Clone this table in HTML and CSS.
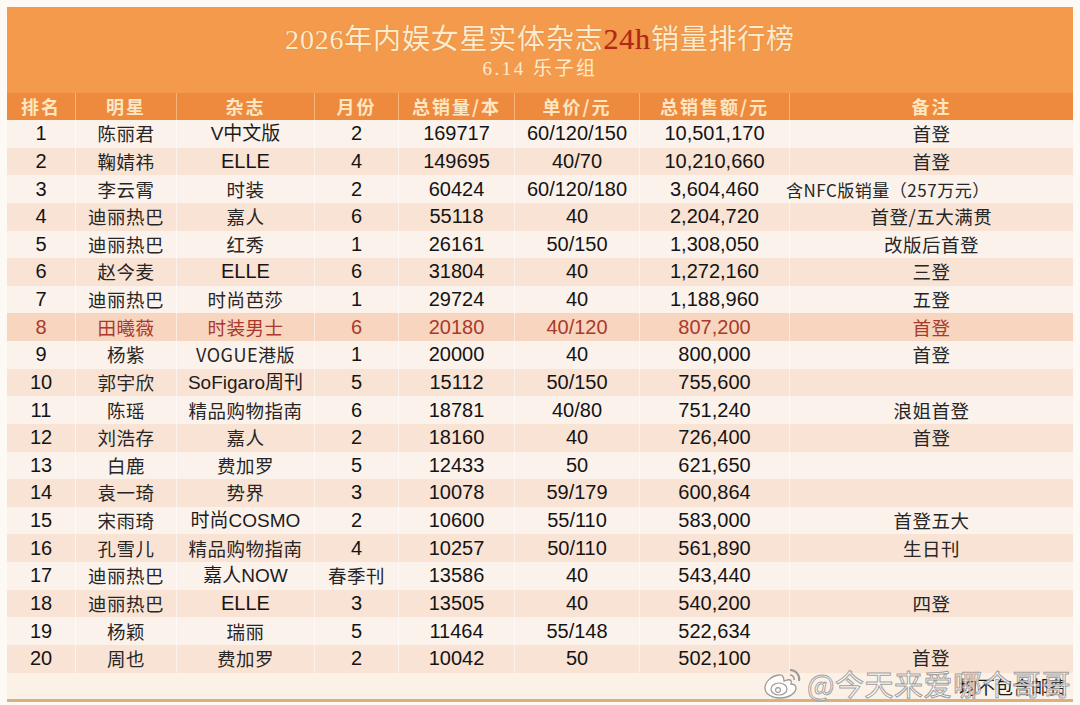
FILE: index.html
```html
<!DOCTYPE html>
<html lang="zh-CN">
<head>
<meta charset="utf-8">
<title>2026年内娱女星实体杂志24h销量排行榜</title>
<link rel="stylesheet" href="styles.css">
</head>
<body>
<div class="sheet">
  <div class="banner">
    <div class="title">2026年内娱女星实体杂志<span class="hl">24h</span>销量排行榜</div>
    <div class="subtitle">6.14 乐子组</div>
  </div>
  <div class="grid head">
    <div>排名</div><div>明星</div><div>杂志</div><div>月份</div><div>总销量/本</div><div>单价/元</div><div>总销售额/元</div><div>备注</div>
  </div>
  <div class="body">
    <div class="grid row odd"><div>1</div><div class="cjk">陈丽君</div><div class="mix">V中文版</div><div>2</div><div>169717</div><div>60/120/150</div><div>10,501,170</div><div class="cjk">首登</div></div>
    <div class="grid row even"><div>2</div><div class="cjk">鞠婧祎</div><div>ELLE</div><div>4</div><div>149695</div><div>40/70</div><div>10,210,660</div><div class="cjk">首登</div></div>
    <div class="grid row odd"><div>3</div><div class="cjk">李云霄</div><div class="cjk">时装</div><div>2</div><div>60424</div><div>60/120/180</div><div>3,604,460</div><div class="cjk small left">含NFC版销量（257万元）</div></div>
    <div class="grid row even"><div>4</div><div class="cjk">迪丽热巴</div><div class="cjk">嘉人</div><div>6</div><div>55118</div><div>40</div><div>2,204,720</div><div class="cjk">首登/五大满贯</div></div>
    <div class="grid row odd"><div>5</div><div class="cjk">迪丽热巴</div><div class="cjk">红秀</div><div>1</div><div>26161</div><div>50/150</div><div>1,308,050</div><div class="cjk">改版后首登</div></div>
    <div class="grid row even"><div>6</div><div class="cjk">赵今麦</div><div>ELLE</div><div>6</div><div>31804</div><div>40</div><div>1,272,160</div><div class="cjk">三登</div></div>
    <div class="grid row odd"><div>7</div><div class="cjk">迪丽热巴</div><div class="cjk">时尚芭莎</div><div>1</div><div>29724</div><div>40</div><div>1,188,960</div><div class="cjk">五登</div></div>
    <div class="grid row mark"><div>8</div><div class="cjk">田曦薇</div><div class="cjk">时装男士</div><div>6</div><div>20180</div><div>40/120</div><div>807,200</div><div class="cjk">首登</div></div>
    <div class="grid row odd"><div>9</div><div class="cjk">杨紫</div><div class="cjk narrow">VOGUE港版</div><div>1</div><div>20000</div><div>40</div><div>800,000</div><div class="cjk">首登</div></div>
    <div class="grid row even"><div>10</div><div class="cjk">郭宇欣</div><div class="mix">SoFigaro周刊</div><div>5</div><div>15112</div><div>50/150</div><div>755,600</div><div></div></div>
    <div class="grid row odd"><div>11</div><div class="cjk">陈瑶</div><div class="cjk">精品购物指南</div><div>6</div><div>18781</div><div>40/80</div><div>751,240</div><div class="cjk">浪姐首登</div></div>
    <div class="grid row even"><div>12</div><div class="cjk">刘浩存</div><div class="cjk">嘉人</div><div>2</div><div>18160</div><div>40</div><div>726,400</div><div class="cjk">首登</div></div>
    <div class="grid row odd"><div>13</div><div class="cjk">白鹿</div><div class="cjk">费加罗</div><div>5</div><div>12433</div><div>50</div><div>621,650</div><div></div></div>
    <div class="grid row even"><div>14</div><div class="cjk">袁一琦</div><div class="cjk">势界</div><div>3</div><div>10078</div><div>59/179</div><div>600,864</div><div></div></div>
    <div class="grid row odd"><div>15</div><div class="cjk">宋雨琦</div><div class="mix">时尚COSMO</div><div>2</div><div>10600</div><div>55/110</div><div>583,000</div><div class="cjk">首登五大</div></div>
    <div class="grid row even"><div>16</div><div class="cjk">孔雪儿</div><div class="cjk">精品购物指南</div><div>4</div><div>10257</div><div>50/110</div><div>561,890</div><div class="cjk">生日刊</div></div>
    <div class="grid row odd"><div>17</div><div class="cjk">迪丽热巴</div><div class="mix">嘉人NOW</div><div class="cjk">春季刊</div><div>13586</div><div>40</div><div>543,440</div><div></div></div>
    <div class="grid row even"><div>18</div><div class="cjk">迪丽热巴</div><div>ELLE</div><div>3</div><div>13505</div><div>40</div><div>540,200</div><div class="cjk">四登</div></div>
    <div class="grid row odd"><div>19</div><div class="cjk">杨颖</div><div class="cjk">瑞丽</div><div>5</div><div>11464</div><div>55/148</div><div>522,634</div><div></div></div>
    <div class="grid row even"><div>20</div><div class="cjk">周也</div><div class="cjk">费加罗</div><div>2</div><div>10042</div><div>50</div><div>502,100</div><div class="cjk up">首登</div></div>
  </div>
  <div class="foot">均不包含邮费</div>
  <div class="watermark">
    <svg class="wb" viewBox="0 0 40 34" width="40" height="34">
      <path d="M16 9c-8 1-14 7-14 13 0 6 7 10 15 10 9 0 16-5 16-10 0-3-3-4-5-4 1-3 0-5-4-4l-3 1c0-4-2-7-5-6z" fill="#fff" fill-opacity=".85" stroke="#9a9a9a" stroke-width="1.3"/>
      <ellipse cx="16" cy="23" rx="8" ry="6" fill="none" stroke="#9a9a9a" stroke-width="1.2"/>
      <circle cx="15" cy="24" r="2.4" fill="none" stroke="#9a9a9a" stroke-width="1.1"/>
      <path d="M27 4a9 9 0 0 1 9 11" fill="none" stroke="#9a9a9a" stroke-width="2"/>
      <path d="M27 9a4 4 0 0 1 4 5" fill="none" stroke="#9a9a9a" stroke-width="1.6"/>
    </svg>
    <span class="wmtext">@今天来爱哪个哥哥</span>
  </div>
</div>
</body>
</html>
```
FILE: styles.css
```css
html, body {
  margin: 0;
  padding: 0;
}
body {
  background: #fdfaf5;
  width: 1080px;
  height: 705px;
  overflow: hidden;
  font-family: "Liberation Sans", "Noto Sans CJK SC", sans-serif;
}
.sheet {
  position: relative;
  margin: 7px 0 0 7px;
  width: 1066px;
  border-bottom: 3px solid #dcb07e;
}
.banner {
  height: 86px;
  background: #f49a4c;
  display: flex;
  flex-direction: column;
  align-items: center;
  box-sizing: border-box;
  padding-top: 13px;
  color: #fcebcc;
  font-family: "Liberation Serif", "Noto Sans CJK SC", serif;
}
.title {
  font-size: 28px;
  line-height: 38px;
  letter-spacing: 0.8px;
  text-shadow: 0 0 1px rgba(150, 70, 10, 0.4);
}
.title .hl {
  color: #b3261a;
  font-size: 30px;
}
.subtitle {
  font-size: 19px;
  line-height: 24px;
  letter-spacing: 2.5px;
  margin-top: -2px;
}
.grid {
  display: grid;
  grid-template-columns: 69px 101px 138px 84px 116px 125px 150px 283px;
}
.head {
  height: 27px;
  background: #ee8a3d;
  color: #fde6c2;
  font-family: "Noto Sans CJK SC", sans-serif;
  font-size: 18px;
  font-weight: 700;
  letter-spacing: 2px;
}
.head > div {
  display: flex;
  align-items: center;
  justify-content: center;
  border-right: 1px solid #f6b679;
  line-height: 27px;
}
.head > div:last-child {
  border-right: none;
}
.row {
  height: 27.63px;
  font-size: 20px;
  color: #141414;
}
.row > div {
  display: flex;
  align-items: center;
  justify-content: center;
  border-right: 1px solid rgba(255, 255, 255, 0.55);
  white-space: nowrap;
  line-height: 27px;
}
.row > div:last-child {
  border-right: none;
}
.odd {
  background: #fcf2ec;
}
.even {
  background: #f9e3d4;
}
.mark {
  background: #f7d5bf;
  color: #a93a2c;
}
.cjk {
  font-family: "Noto Sans CJK SC", sans-serif;
  font-size: 18.5px;
  color: #262626;
  letter-spacing: 0.5px;
}
.mix {
  font-size: 19px;
  color: #1c1c1c;
}
.mark .cjk {
  color: #a93a2c;
}
.small {
  font-size: 17px;
}
.left {
  justify-content: flex-start !important;
  margin-left: -4px;
}
.up {
  align-items: flex-start !important;
  line-height: 24px !important;
  justify-content: flex-start !important;
  padding-left: 122px;
}
.narrow {
  font-family: "Liberation Sans Narrow", "Noto Sans CJK SC", sans-serif;
  font-size: 18px;
}
.foot {
  height: 26px;
  background: #fcf1e7;
  text-align: right;
  font-family: "Noto Sans CJK SC", serif;
  font-size: 18px;
  line-height: 26px;
  color: #1a1a1a;
  padding-right: 6px;
  overflow: hidden;
}
.watermark {
  position: absolute;
  right: 2px;
  bottom: -1px;
  display: flex;
  align-items: center;
  gap: 4px;
}
.wmtext {
  font-family: "Noto Sans CJK SC", sans-serif;
  font-size: 29px;
  color: rgba(255, 255, 255, 0.82);
  -webkit-text-stroke: 1px rgba(130, 130, 130, 0.75);
  letter-spacing: 0.5px;
  line-height: 30px;
}
```
